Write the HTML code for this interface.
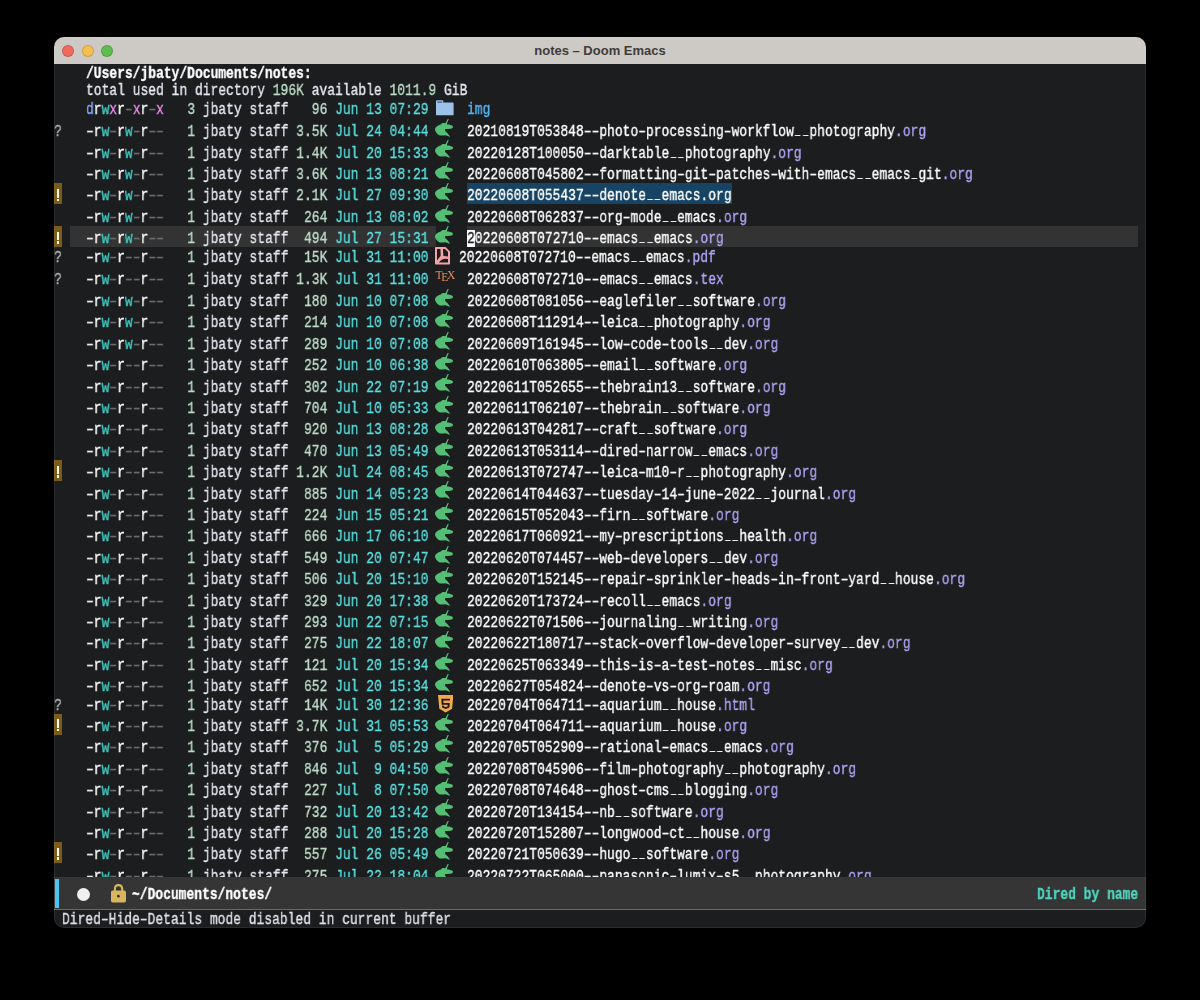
<!DOCTYPE html>
<html><head><meta charset="utf-8"><title>notes - Doom Emacs</title>
<style>
html,body{margin:0;padding:0;background:#000;width:1200px;height:1000px;overflow:hidden}
#win{position:absolute;left:54px;top:37px;width:1092px;height:891px;border-radius:10px;overflow:hidden;background:#1c1d1f}
#wb{position:absolute;left:0;top:0;width:1092px;height:891px;border-radius:10px;box-shadow:inset 0 0 0 1px rgba(255,255,255,0.07);pointer-events:none}
#tb{position:absolute;left:0;top:0;width:1092px;height:27px;background:#cdc9c5}
#tt{position:absolute;left:0;top:6px;width:1092px;text-align:center;font-family:"Liberation Sans",sans-serif;font-weight:bold;font-size:13px;color:#3e3c3b;white-space:pre}
.tl{position:absolute;top:7.8px;width:12px;height:12px;border-radius:50%;box-sizing:border-box;border:0.5px solid rgba(0,0,0,0.15)}
.r{position:absolute;left:31.700000000000003px;white-space:pre;font-family:"Liberation Mono",monospace;font-size:16px;line-height:20px;height:20px;transform:scaleX(0.8104);transform-origin:0 0;will-change:transform;color:#dfe1ea;-webkit-text-stroke:0.35px currentColor}
.r i{font-style:normal}
.r u{text-decoration:none;display:inline-block;transform:translateY(-2.5px) scaleX(0.66)}
.pd{color:#82aaff}.p0{color:#eeeeee}.pn{color:#6e6e6e}.pr{color:#ffffff}.pw{color:#3fcfc6}.px{color:#f08cf0}
.ln{color:#b4dcc2}.us{color:#e6e7f2}.sz{color:#bcdcc8}.dt{color:#58dede}
.fn{color:#ffffff}.ex{color:#b0a4f5}
.ic{position:absolute}
.bang{position:absolute;left:0;width:8px;height:21px;background:#7b5b16}
.bb{position:absolute;left:3px;top:5.6px;width:2.2px;height:8.8px;background:#fffaf0}
.bd{position:absolute;left:3px;top:15.4px;width:2.2px;height:2.4px;background:#fffaf0}
.hd{font-weight:bold;color:#ffffff}
.dn{color:#52b5f3}
.hl{position:absolute;background:#333333}
.sel{position:absolute;background:#174464}
.cur{color:#1c1d1f;-webkit-text-stroke:0.35px #1c1d1f}
.curb{position:absolute;background:#ffffff}
.tex{position:absolute;font-family:"Liberation Serif",serif;font-size:11.5px;color:#e98c5e;line-height:14px;white-space:pre;letter-spacing:-1.3px}
.tex span{position:relative;top:2px}
#ml{position:absolute;left:0;top:839.5px;width:1092px;height:32.5px;background:#353535;overflow:hidden}
#mlbar{position:absolute;left:1px;top:2.5px;width:3.5px;height:29px;background:#4cc4f2}
#mldot{position:absolute;left:22.6px;top:11.1px;width:13.6px;height:13.6px;border-radius:50%;background:#f0f0f0}
#lock{position:absolute;left:57px;top:7px}
.mlt{font-weight:bold;color:#ffffff}
.mlr{font-weight:bold;color:#4fd5bd}
#mlline{position:absolute;left:0;top:872px;width:1092px;height:1px;background:#6a6a6a}
.q{position:absolute;left:-0.7px;width:10px;font-family:"Liberation Mono",monospace;font-size:16px;line-height:20px;color:#b4b4b4;text-align:center;-webkit-text-stroke:0.3px #b4b4b4;transform:scaleX(0.8);will-change:transform}
</style></head><body>
<div id="win">
 <div id="tb"><div id="tt">notes – Doom Emacs</div>
  <div class="tl" style="left:8px;background:#ee6a5f"></div>
  <div class="tl" style="left:27.8px;background:#f5be4f"></div>
  <div class="tl" style="left:47px;background:#5ebd4e"></div>
 </div>
<div class="r hd" style="top:27.0px">/Users/jbaty/Documents/notes:</div>
<div class="r" style="top:44.0px"><i class="us">total used in directory </i><i class="sz">196K</i><i class="us"> available </i><i class="sz">1011.9</i><i class="us"> GiB</i></div>
<div class="r" style="top:63.0px"><i class="pd">d</i><i class="pr">r</i><i class="pw">w</i><i class="px">x</i><i class="pr">r</i><i class="pn">–</i><i class="px">x</i><i class="pr">r</i><i class="pn">–</i><i class="px">x</i>   <i class="ln">3</i> <i class="us">jbaty staff</i> <i class="sz">  96</i> <i class="dt">Jun 13 07:29</i></div>
<svg class="ic" style="left:381.7px;top:63.0px" width="18" height="16" viewBox="0 0 18 16"><path fill="#9cc2ea" d="M1 0.3 H6.4 Q7.3 0.3 7.3 1.2 V2.4 H16.6 Q17.6 2.4 17.6 3.4 V14.4 Q17.6 15.3 16.6 15.3 H1 Q0 15.3 0 14.4 V1.3 Q0 0.3 1 0.3 Z"/><rect x="1.3" y="1.6" width="5" height="1" fill="#33465c"/></svg>
<div class="r" style="top:63.0px;left:413.0px"><i class="dn">img</i></div>
<div class="hl" style="left:16.0px;top:189.2px;width:366.0px;height:21px"></div>
<div class="hl" style="left:413.0px;top:189.2px;width:671.2px;height:21px"></div>
<div class="curb" style="left:413.0px;top:193.0px;width:8px;height:17px"></div>
<div class="sel" style="left:412.7px;top:146.2px;width:264.9px;height:21px"></div>
<div class="q" style="top:85.2px">?</div>
<div class="r" style="top:85.2px"><i class="p0">–</i><i class="pr">r</i><i class="pw">w</i><i class="pn">–</i><i class="pr">r</i><i class="pw">w</i><i class="pn">–</i><i class="pr">r</i><i class="pn">–</i><i class="pn">–</i>   <i class="ln">1</i> <i class="us">jbaty staff</i> <i class="sz">3.5K</i> <i class="dt">Jul 24 04:44</i></div>
<svg class="ic" style="left:378.0px;top:80.0px" width="24" height="24" viewBox="0 0 24 24" fill="#54bf74"><path d="M16.90 2.10 C16.90 2.10 15.02 6.01 15.00 7.00 C14.98 7.99 15.92 7.33 16.80 7.60 C17.68 7.87 19.14 8.14 19.90 8.50 C20.66 8.86 21.00 9.60 21.00 9.60 C21.00 9.60 21.10 10.40 20.70 10.80 C20.30 11.20 20.11 11.58 18.80 11.80 C17.49 12.02 13.40 12.00 13.40 12.00 C13.40 12.00 12.98 12.59 13.00 13.00 C13.02 13.41 13.03 13.71 13.50 14.30 C13.97 14.89 14.92 15.53 15.60 16.30 C16.28 17.07 16.89 17.93 17.30 18.60 C17.71 19.27 17.90 20.00 17.90 20.00 C17.90 20.00 17.11 19.52 16.30 19.20 C15.49 18.88 14.61 18.31 13.40 18.20 C12.19 18.09 10.81 18.65 9.60 18.60 C8.39 18.55 7.67 18.44 6.70 17.90 C5.73 17.36 4.87 16.55 4.20 15.60 C3.53 14.65 3.09 13.54 3.00 12.60 C2.91 11.66 3.27 11.05 3.70 10.40 C4.13 9.75 4.64 9.47 5.40 9.00 C6.16 8.53 7.23 8.12 7.90 7.80 C8.57 7.48 8.70 7.49 9.10 7.20 C9.50 6.91 9.65 6.42 10.10 6.20 C10.55 5.98 11.01 6.05 11.60 6.00 C12.19 5.95 12.73 6.55 13.40 5.90 C14.07 5.25 15.30 2.40 15.30 2.40 C15.30 2.40 16.90 2.10 16.90 2.10 Z"/></svg>
<div class="r" style="top:85.2px;left:413.0px"><i class="fn">20210819T053848––photo–processing–workflow<u>_</u><u>_</u>photography</i><i class="ex">.org</i></div>
<div class="r" style="top:106.6px"><i class="p0">–</i><i class="pr">r</i><i class="pw">w</i><i class="pn">–</i><i class="pr">r</i><i class="pw">w</i><i class="pn">–</i><i class="pr">r</i><i class="pn">–</i><i class="pn">–</i>   <i class="ln">1</i> <i class="us">jbaty staff</i> <i class="sz">1.4K</i> <i class="dt">Jul 20 15:33</i></div>
<svg class="ic" style="left:378.0px;top:101.4px" width="24" height="24" viewBox="0 0 24 24" fill="#54bf74"><path d="M16.90 2.10 C16.90 2.10 15.02 6.01 15.00 7.00 C14.98 7.99 15.92 7.33 16.80 7.60 C17.68 7.87 19.14 8.14 19.90 8.50 C20.66 8.86 21.00 9.60 21.00 9.60 C21.00 9.60 21.10 10.40 20.70 10.80 C20.30 11.20 20.11 11.58 18.80 11.80 C17.49 12.02 13.40 12.00 13.40 12.00 C13.40 12.00 12.98 12.59 13.00 13.00 C13.02 13.41 13.03 13.71 13.50 14.30 C13.97 14.89 14.92 15.53 15.60 16.30 C16.28 17.07 16.89 17.93 17.30 18.60 C17.71 19.27 17.90 20.00 17.90 20.00 C17.90 20.00 17.11 19.52 16.30 19.20 C15.49 18.88 14.61 18.31 13.40 18.20 C12.19 18.09 10.81 18.65 9.60 18.60 C8.39 18.55 7.67 18.44 6.70 17.90 C5.73 17.36 4.87 16.55 4.20 15.60 C3.53 14.65 3.09 13.54 3.00 12.60 C2.91 11.66 3.27 11.05 3.70 10.40 C4.13 9.75 4.64 9.47 5.40 9.00 C6.16 8.53 7.23 8.12 7.90 7.80 C8.57 7.48 8.70 7.49 9.10 7.20 C9.50 6.91 9.65 6.42 10.10 6.20 C10.55 5.98 11.01 6.05 11.60 6.00 C12.19 5.95 12.73 6.55 13.40 5.90 C14.07 5.25 15.30 2.40 15.30 2.40 C15.30 2.40 16.90 2.10 16.90 2.10 Z"/></svg>
<div class="r" style="top:106.6px;left:413.0px"><i class="fn">20220128T100050––darktable<u>_</u><u>_</u>photography</i><i class="ex">.org</i></div>
<div class="r" style="top:128.0px"><i class="p0">–</i><i class="pr">r</i><i class="pw">w</i><i class="pn">–</i><i class="pr">r</i><i class="pw">w</i><i class="pn">–</i><i class="pr">r</i><i class="pn">–</i><i class="pn">–</i>   <i class="ln">1</i> <i class="us">jbaty staff</i> <i class="sz">3.6K</i> <i class="dt">Jun 13 08:21</i></div>
<svg class="ic" style="left:378.0px;top:122.8px" width="24" height="24" viewBox="0 0 24 24" fill="#54bf74"><path d="M16.90 2.10 C16.90 2.10 15.02 6.01 15.00 7.00 C14.98 7.99 15.92 7.33 16.80 7.60 C17.68 7.87 19.14 8.14 19.90 8.50 C20.66 8.86 21.00 9.60 21.00 9.60 C21.00 9.60 21.10 10.40 20.70 10.80 C20.30 11.20 20.11 11.58 18.80 11.80 C17.49 12.02 13.40 12.00 13.40 12.00 C13.40 12.00 12.98 12.59 13.00 13.00 C13.02 13.41 13.03 13.71 13.50 14.30 C13.97 14.89 14.92 15.53 15.60 16.30 C16.28 17.07 16.89 17.93 17.30 18.60 C17.71 19.27 17.90 20.00 17.90 20.00 C17.90 20.00 17.11 19.52 16.30 19.20 C15.49 18.88 14.61 18.31 13.40 18.20 C12.19 18.09 10.81 18.65 9.60 18.60 C8.39 18.55 7.67 18.44 6.70 17.90 C5.73 17.36 4.87 16.55 4.20 15.60 C3.53 14.65 3.09 13.54 3.00 12.60 C2.91 11.66 3.27 11.05 3.70 10.40 C4.13 9.75 4.64 9.47 5.40 9.00 C6.16 8.53 7.23 8.12 7.90 7.80 C8.57 7.48 8.70 7.49 9.10 7.20 C9.50 6.91 9.65 6.42 10.10 6.20 C10.55 5.98 11.01 6.05 11.60 6.00 C12.19 5.95 12.73 6.55 13.40 5.90 C14.07 5.25 15.30 2.40 15.30 2.40 C15.30 2.40 16.90 2.10 16.90 2.10 Z"/></svg>
<div class="r" style="top:128.0px;left:413.0px"><i class="fn">20220608T045802––formatting–git–patches–with–emacs<u>_</u><u>_</u>emacs<u>_</u>git</i><i class="ex">.org</i></div>
<div class="bang" style="top:146.2px"><div class="bb"></div><div class="bd"></div></div>
<div class="r" style="top:149.4px"><i class="p0">–</i><i class="pr">r</i><i class="pw">w</i><i class="pn">–</i><i class="pr">r</i><i class="pw">w</i><i class="pn">–</i><i class="pr">r</i><i class="pn">–</i><i class="pn">–</i>   <i class="ln">1</i> <i class="us">jbaty staff</i> <i class="sz">2.1K</i> <i class="dt">Jul 27 09:30</i></div>
<svg class="ic" style="left:378.0px;top:144.2px" width="24" height="24" viewBox="0 0 24 24" fill="#54bf74"><path d="M16.90 2.10 C16.90 2.10 15.02 6.01 15.00 7.00 C14.98 7.99 15.92 7.33 16.80 7.60 C17.68 7.87 19.14 8.14 19.90 8.50 C20.66 8.86 21.00 9.60 21.00 9.60 C21.00 9.60 21.10 10.40 20.70 10.80 C20.30 11.20 20.11 11.58 18.80 11.80 C17.49 12.02 13.40 12.00 13.40 12.00 C13.40 12.00 12.98 12.59 13.00 13.00 C13.02 13.41 13.03 13.71 13.50 14.30 C13.97 14.89 14.92 15.53 15.60 16.30 C16.28 17.07 16.89 17.93 17.30 18.60 C17.71 19.27 17.90 20.00 17.90 20.00 C17.90 20.00 17.11 19.52 16.30 19.20 C15.49 18.88 14.61 18.31 13.40 18.20 C12.19 18.09 10.81 18.65 9.60 18.60 C8.39 18.55 7.67 18.44 6.70 17.90 C5.73 17.36 4.87 16.55 4.20 15.60 C3.53 14.65 3.09 13.54 3.00 12.60 C2.91 11.66 3.27 11.05 3.70 10.40 C4.13 9.75 4.64 9.47 5.40 9.00 C6.16 8.53 7.23 8.12 7.90 7.80 C8.57 7.48 8.70 7.49 9.10 7.20 C9.50 6.91 9.65 6.42 10.10 6.20 C10.55 5.98 11.01 6.05 11.60 6.00 C12.19 5.95 12.73 6.55 13.40 5.90 C14.07 5.25 15.30 2.40 15.30 2.40 C15.30 2.40 16.90 2.10 16.90 2.10 Z"/></svg>
<div class="r" style="top:149.4px;left:413.0px"><i class="fn">20220608T055437––denote<u>_</u><u>_</u>emacs.org</i></div>
<div class="r" style="top:170.8px"><i class="p0">–</i><i class="pr">r</i><i class="pw">w</i><i class="pn">–</i><i class="pr">r</i><i class="pw">w</i><i class="pn">–</i><i class="pr">r</i><i class="pn">–</i><i class="pn">–</i>   <i class="ln">1</i> <i class="us">jbaty staff</i> <i class="sz"> 264</i> <i class="dt">Jun 13 08:02</i></div>
<svg class="ic" style="left:378.0px;top:165.6px" width="24" height="24" viewBox="0 0 24 24" fill="#54bf74"><path d="M16.90 2.10 C16.90 2.10 15.02 6.01 15.00 7.00 C14.98 7.99 15.92 7.33 16.80 7.60 C17.68 7.87 19.14 8.14 19.90 8.50 C20.66 8.86 21.00 9.60 21.00 9.60 C21.00 9.60 21.10 10.40 20.70 10.80 C20.30 11.20 20.11 11.58 18.80 11.80 C17.49 12.02 13.40 12.00 13.40 12.00 C13.40 12.00 12.98 12.59 13.00 13.00 C13.02 13.41 13.03 13.71 13.50 14.30 C13.97 14.89 14.92 15.53 15.60 16.30 C16.28 17.07 16.89 17.93 17.30 18.60 C17.71 19.27 17.90 20.00 17.90 20.00 C17.90 20.00 17.11 19.52 16.30 19.20 C15.49 18.88 14.61 18.31 13.40 18.20 C12.19 18.09 10.81 18.65 9.60 18.60 C8.39 18.55 7.67 18.44 6.70 17.90 C5.73 17.36 4.87 16.55 4.20 15.60 C3.53 14.65 3.09 13.54 3.00 12.60 C2.91 11.66 3.27 11.05 3.70 10.40 C4.13 9.75 4.64 9.47 5.40 9.00 C6.16 8.53 7.23 8.12 7.90 7.80 C8.57 7.48 8.70 7.49 9.10 7.20 C9.50 6.91 9.65 6.42 10.10 6.20 C10.55 5.98 11.01 6.05 11.60 6.00 C12.19 5.95 12.73 6.55 13.40 5.90 C14.07 5.25 15.30 2.40 15.30 2.40 C15.30 2.40 16.90 2.10 16.90 2.10 Z"/></svg>
<div class="r" style="top:170.8px;left:413.0px"><i class="fn">20220608T062837––org–mode<u>_</u><u>_</u>emacs</i><i class="ex">.org</i></div>
<div class="bang" style="top:189.0px"><div class="bb"></div><div class="bd"></div></div>
<div class="r" style="top:192.2px"><i class="p0">–</i><i class="pr">r</i><i class="pw">w</i><i class="pn">–</i><i class="pr">r</i><i class="pw">w</i><i class="pn">–</i><i class="pr">r</i><i class="pn">–</i><i class="pn">–</i>   <i class="ln">1</i> <i class="us">jbaty staff</i> <i class="sz"> 494</i> <i class="dt">Jul 27 15:31</i></div>
<svg class="ic" style="left:378.0px;top:187.0px" width="24" height="24" viewBox="0 0 24 24" fill="#54bf74"><path d="M16.90 2.10 C16.90 2.10 15.02 6.01 15.00 7.00 C14.98 7.99 15.92 7.33 16.80 7.60 C17.68 7.87 19.14 8.14 19.90 8.50 C20.66 8.86 21.00 9.60 21.00 9.60 C21.00 9.60 21.10 10.40 20.70 10.80 C20.30 11.20 20.11 11.58 18.80 11.80 C17.49 12.02 13.40 12.00 13.40 12.00 C13.40 12.00 12.98 12.59 13.00 13.00 C13.02 13.41 13.03 13.71 13.50 14.30 C13.97 14.89 14.92 15.53 15.60 16.30 C16.28 17.07 16.89 17.93 17.30 18.60 C17.71 19.27 17.90 20.00 17.90 20.00 C17.90 20.00 17.11 19.52 16.30 19.20 C15.49 18.88 14.61 18.31 13.40 18.20 C12.19 18.09 10.81 18.65 9.60 18.60 C8.39 18.55 7.67 18.44 6.70 17.90 C5.73 17.36 4.87 16.55 4.20 15.60 C3.53 14.65 3.09 13.54 3.00 12.60 C2.91 11.66 3.27 11.05 3.70 10.40 C4.13 9.75 4.64 9.47 5.40 9.00 C6.16 8.53 7.23 8.12 7.90 7.80 C8.57 7.48 8.70 7.49 9.10 7.20 C9.50 6.91 9.65 6.42 10.10 6.20 C10.55 5.98 11.01 6.05 11.60 6.00 C12.19 5.95 12.73 6.55 13.40 5.90 C14.07 5.25 15.30 2.40 15.30 2.40 C15.30 2.40 16.90 2.10 16.90 2.10 Z"/></svg>
<div class="r" style="top:192.2px;left:413.0px"><i class="cur">2</i><i class="fn">0220608T072710––emacs<u>_</u><u>_</u>emacs</i><i class="ex">.org</i></div>
<div class="q" style="top:210.9px">?</div>
<div class="r" style="top:210.9px"><i class="p0">–</i><i class="pr">r</i><i class="pw">w</i><i class="pn">–</i><i class="pr">r</i><i class="pn">–</i><i class="pn">–</i><i class="pr">r</i><i class="pn">–</i><i class="pn">–</i>   <i class="ln">1</i> <i class="us">jbaty staff</i> <i class="sz"> 15K</i> <i class="dt">Jul 31 11:00</i></div>
<svg class="ic" style="left:381.0px;top:210.0px" width="15" height="17.5" viewBox="0 0 15 17.5"><path fill="#f2a3a3" fill-rule="evenodd" d="M0.8 0 H10.6 L15 4.4 V16.7 Q15 17.5 14.2 17.5 H0.8 Q0 17.5 0 16.7 V0.8 Q0 0 0.8 0 Z M2 2 H5.4 L5.7 8.8 L2 13.6 Z M8 2 H10 L13 5 V9.4 L8.5 9.1 L8.1 5.5 Z M3.9 15.5 H13 V12 Q9.5 11.6 7.2 12.4 Q5.2 13.3 3.9 15.5 Z"/></svg>
<div class="r" style="top:210.9px;left:405.0px"><i class="fn">20220608T072710––emacs<u>_</u><u>_</u>emacs</i><i class="ex">.pdf</i></div>
<div class="q" style="top:232.8px">?</div>
<div class="r" style="top:232.8px"><i class="p0">–</i><i class="pr">r</i><i class="pw">w</i><i class="pn">–</i><i class="pr">r</i><i class="pn">–</i><i class="pn">–</i><i class="pr">r</i><i class="pn">–</i><i class="pn">–</i>   <i class="ln">1</i> <i class="us">jbaty staff</i> <i class="sz">1.3K</i> <i class="dt">Jul 31 11:00</i></div>
<div class="tex" style="left:381.5px;top:231.0px">T<span>E</span>X</div>
<div class="r" style="top:232.8px;left:413.0px"><i class="fn">20220608T072710––emacs<u>_</u><u>_</u>emacs</i><i class="ex">.tex</i></div>
<div class="r" style="top:255.0px"><i class="p0">–</i><i class="pr">r</i><i class="pw">w</i><i class="pn">–</i><i class="pr">r</i><i class="pw">w</i><i class="pn">–</i><i class="pr">r</i><i class="pn">–</i><i class="pn">–</i>   <i class="ln">1</i> <i class="us">jbaty staff</i> <i class="sz"> 180</i> <i class="dt">Jun 10 07:08</i></div>
<svg class="ic" style="left:378.0px;top:249.8px" width="24" height="24" viewBox="0 0 24 24" fill="#54bf74"><path d="M16.90 2.10 C16.90 2.10 15.02 6.01 15.00 7.00 C14.98 7.99 15.92 7.33 16.80 7.60 C17.68 7.87 19.14 8.14 19.90 8.50 C20.66 8.86 21.00 9.60 21.00 9.60 C21.00 9.60 21.10 10.40 20.70 10.80 C20.30 11.20 20.11 11.58 18.80 11.80 C17.49 12.02 13.40 12.00 13.40 12.00 C13.40 12.00 12.98 12.59 13.00 13.00 C13.02 13.41 13.03 13.71 13.50 14.30 C13.97 14.89 14.92 15.53 15.60 16.30 C16.28 17.07 16.89 17.93 17.30 18.60 C17.71 19.27 17.90 20.00 17.90 20.00 C17.90 20.00 17.11 19.52 16.30 19.20 C15.49 18.88 14.61 18.31 13.40 18.20 C12.19 18.09 10.81 18.65 9.60 18.60 C8.39 18.55 7.67 18.44 6.70 17.90 C5.73 17.36 4.87 16.55 4.20 15.60 C3.53 14.65 3.09 13.54 3.00 12.60 C2.91 11.66 3.27 11.05 3.70 10.40 C4.13 9.75 4.64 9.47 5.40 9.00 C6.16 8.53 7.23 8.12 7.90 7.80 C8.57 7.48 8.70 7.49 9.10 7.20 C9.50 6.91 9.65 6.42 10.10 6.20 C10.55 5.98 11.01 6.05 11.60 6.00 C12.19 5.95 12.73 6.55 13.40 5.90 C14.07 5.25 15.30 2.40 15.30 2.40 C15.30 2.40 16.90 2.10 16.90 2.10 Z"/></svg>
<div class="r" style="top:255.0px;left:413.0px"><i class="fn">20220608T081056––eaglefiler<u>_</u><u>_</u>software</i><i class="ex">.org</i></div>
<div class="r" style="top:276.4px"><i class="p0">–</i><i class="pr">r</i><i class="pw">w</i><i class="pn">–</i><i class="pr">r</i><i class="pw">w</i><i class="pn">–</i><i class="pr">r</i><i class="pn">–</i><i class="pn">–</i>   <i class="ln">1</i> <i class="us">jbaty staff</i> <i class="sz"> 214</i> <i class="dt">Jun 10 07:08</i></div>
<svg class="ic" style="left:378.0px;top:271.2px" width="24" height="24" viewBox="0 0 24 24" fill="#54bf74"><path d="M16.90 2.10 C16.90 2.10 15.02 6.01 15.00 7.00 C14.98 7.99 15.92 7.33 16.80 7.60 C17.68 7.87 19.14 8.14 19.90 8.50 C20.66 8.86 21.00 9.60 21.00 9.60 C21.00 9.60 21.10 10.40 20.70 10.80 C20.30 11.20 20.11 11.58 18.80 11.80 C17.49 12.02 13.40 12.00 13.40 12.00 C13.40 12.00 12.98 12.59 13.00 13.00 C13.02 13.41 13.03 13.71 13.50 14.30 C13.97 14.89 14.92 15.53 15.60 16.30 C16.28 17.07 16.89 17.93 17.30 18.60 C17.71 19.27 17.90 20.00 17.90 20.00 C17.90 20.00 17.11 19.52 16.30 19.20 C15.49 18.88 14.61 18.31 13.40 18.20 C12.19 18.09 10.81 18.65 9.60 18.60 C8.39 18.55 7.67 18.44 6.70 17.90 C5.73 17.36 4.87 16.55 4.20 15.60 C3.53 14.65 3.09 13.54 3.00 12.60 C2.91 11.66 3.27 11.05 3.70 10.40 C4.13 9.75 4.64 9.47 5.40 9.00 C6.16 8.53 7.23 8.12 7.90 7.80 C8.57 7.48 8.70 7.49 9.10 7.20 C9.50 6.91 9.65 6.42 10.10 6.20 C10.55 5.98 11.01 6.05 11.60 6.00 C12.19 5.95 12.73 6.55 13.40 5.90 C14.07 5.25 15.30 2.40 15.30 2.40 C15.30 2.40 16.90 2.10 16.90 2.10 Z"/></svg>
<div class="r" style="top:276.4px;left:413.0px"><i class="fn">20220608T112914––leica<u>_</u><u>_</u>photography</i><i class="ex">.org</i></div>
<div class="r" style="top:297.8px"><i class="p0">–</i><i class="pr">r</i><i class="pw">w</i><i class="pn">–</i><i class="pr">r</i><i class="pw">w</i><i class="pn">–</i><i class="pr">r</i><i class="pn">–</i><i class="pn">–</i>   <i class="ln">1</i> <i class="us">jbaty staff</i> <i class="sz"> 289</i> <i class="dt">Jun 10 07:08</i></div>
<svg class="ic" style="left:378.0px;top:292.6px" width="24" height="24" viewBox="0 0 24 24" fill="#54bf74"><path d="M16.90 2.10 C16.90 2.10 15.02 6.01 15.00 7.00 C14.98 7.99 15.92 7.33 16.80 7.60 C17.68 7.87 19.14 8.14 19.90 8.50 C20.66 8.86 21.00 9.60 21.00 9.60 C21.00 9.60 21.10 10.40 20.70 10.80 C20.30 11.20 20.11 11.58 18.80 11.80 C17.49 12.02 13.40 12.00 13.40 12.00 C13.40 12.00 12.98 12.59 13.00 13.00 C13.02 13.41 13.03 13.71 13.50 14.30 C13.97 14.89 14.92 15.53 15.60 16.30 C16.28 17.07 16.89 17.93 17.30 18.60 C17.71 19.27 17.90 20.00 17.90 20.00 C17.90 20.00 17.11 19.52 16.30 19.20 C15.49 18.88 14.61 18.31 13.40 18.20 C12.19 18.09 10.81 18.65 9.60 18.60 C8.39 18.55 7.67 18.44 6.70 17.90 C5.73 17.36 4.87 16.55 4.20 15.60 C3.53 14.65 3.09 13.54 3.00 12.60 C2.91 11.66 3.27 11.05 3.70 10.40 C4.13 9.75 4.64 9.47 5.40 9.00 C6.16 8.53 7.23 8.12 7.90 7.80 C8.57 7.48 8.70 7.49 9.10 7.20 C9.50 6.91 9.65 6.42 10.10 6.20 C10.55 5.98 11.01 6.05 11.60 6.00 C12.19 5.95 12.73 6.55 13.40 5.90 C14.07 5.25 15.30 2.40 15.30 2.40 C15.30 2.40 16.90 2.10 16.90 2.10 Z"/></svg>
<div class="r" style="top:297.8px;left:413.0px"><i class="fn">20220609T161945––low–code–tools<u>_</u><u>_</u>dev</i><i class="ex">.org</i></div>
<div class="r" style="top:319.2px"><i class="p0">–</i><i class="pr">r</i><i class="pw">w</i><i class="pn">–</i><i class="pr">r</i><i class="pn">–</i><i class="pn">–</i><i class="pr">r</i><i class="pn">–</i><i class="pn">–</i>   <i class="ln">1</i> <i class="us">jbaty staff</i> <i class="sz"> 252</i> <i class="dt">Jun 10 06:38</i></div>
<svg class="ic" style="left:378.0px;top:314.0px" width="24" height="24" viewBox="0 0 24 24" fill="#54bf74"><path d="M16.90 2.10 C16.90 2.10 15.02 6.01 15.00 7.00 C14.98 7.99 15.92 7.33 16.80 7.60 C17.68 7.87 19.14 8.14 19.90 8.50 C20.66 8.86 21.00 9.60 21.00 9.60 C21.00 9.60 21.10 10.40 20.70 10.80 C20.30 11.20 20.11 11.58 18.80 11.80 C17.49 12.02 13.40 12.00 13.40 12.00 C13.40 12.00 12.98 12.59 13.00 13.00 C13.02 13.41 13.03 13.71 13.50 14.30 C13.97 14.89 14.92 15.53 15.60 16.30 C16.28 17.07 16.89 17.93 17.30 18.60 C17.71 19.27 17.90 20.00 17.90 20.00 C17.90 20.00 17.11 19.52 16.30 19.20 C15.49 18.88 14.61 18.31 13.40 18.20 C12.19 18.09 10.81 18.65 9.60 18.60 C8.39 18.55 7.67 18.44 6.70 17.90 C5.73 17.36 4.87 16.55 4.20 15.60 C3.53 14.65 3.09 13.54 3.00 12.60 C2.91 11.66 3.27 11.05 3.70 10.40 C4.13 9.75 4.64 9.47 5.40 9.00 C6.16 8.53 7.23 8.12 7.90 7.80 C8.57 7.48 8.70 7.49 9.10 7.20 C9.50 6.91 9.65 6.42 10.10 6.20 C10.55 5.98 11.01 6.05 11.60 6.00 C12.19 5.95 12.73 6.55 13.40 5.90 C14.07 5.25 15.30 2.40 15.30 2.40 C15.30 2.40 16.90 2.10 16.90 2.10 Z"/></svg>
<div class="r" style="top:319.2px;left:413.0px"><i class="fn">20220610T063805––email<u>_</u><u>_</u>software</i><i class="ex">.org</i></div>
<div class="r" style="top:340.6px"><i class="p0">–</i><i class="pr">r</i><i class="pw">w</i><i class="pn">–</i><i class="pr">r</i><i class="pn">–</i><i class="pn">–</i><i class="pr">r</i><i class="pn">–</i><i class="pn">–</i>   <i class="ln">1</i> <i class="us">jbaty staff</i> <i class="sz"> 302</i> <i class="dt">Jun 22 07:19</i></div>
<svg class="ic" style="left:378.0px;top:335.4px" width="24" height="24" viewBox="0 0 24 24" fill="#54bf74"><path d="M16.90 2.10 C16.90 2.10 15.02 6.01 15.00 7.00 C14.98 7.99 15.92 7.33 16.80 7.60 C17.68 7.87 19.14 8.14 19.90 8.50 C20.66 8.86 21.00 9.60 21.00 9.60 C21.00 9.60 21.10 10.40 20.70 10.80 C20.30 11.20 20.11 11.58 18.80 11.80 C17.49 12.02 13.40 12.00 13.40 12.00 C13.40 12.00 12.98 12.59 13.00 13.00 C13.02 13.41 13.03 13.71 13.50 14.30 C13.97 14.89 14.92 15.53 15.60 16.30 C16.28 17.07 16.89 17.93 17.30 18.60 C17.71 19.27 17.90 20.00 17.90 20.00 C17.90 20.00 17.11 19.52 16.30 19.20 C15.49 18.88 14.61 18.31 13.40 18.20 C12.19 18.09 10.81 18.65 9.60 18.60 C8.39 18.55 7.67 18.44 6.70 17.90 C5.73 17.36 4.87 16.55 4.20 15.60 C3.53 14.65 3.09 13.54 3.00 12.60 C2.91 11.66 3.27 11.05 3.70 10.40 C4.13 9.75 4.64 9.47 5.40 9.00 C6.16 8.53 7.23 8.12 7.90 7.80 C8.57 7.48 8.70 7.49 9.10 7.20 C9.50 6.91 9.65 6.42 10.10 6.20 C10.55 5.98 11.01 6.05 11.60 6.00 C12.19 5.95 12.73 6.55 13.40 5.90 C14.07 5.25 15.30 2.40 15.30 2.40 C15.30 2.40 16.90 2.10 16.90 2.10 Z"/></svg>
<div class="r" style="top:340.6px;left:413.0px"><i class="fn">20220611T052655––thebrain13<u>_</u><u>_</u>software</i><i class="ex">.org</i></div>
<div class="r" style="top:362.0px"><i class="p0">–</i><i class="pr">r</i><i class="pw">w</i><i class="pn">–</i><i class="pr">r</i><i class="pn">–</i><i class="pn">–</i><i class="pr">r</i><i class="pn">–</i><i class="pn">–</i>   <i class="ln">1</i> <i class="us">jbaty staff</i> <i class="sz"> 704</i> <i class="dt">Jul 10 05:33</i></div>
<svg class="ic" style="left:378.0px;top:356.8px" width="24" height="24" viewBox="0 0 24 24" fill="#54bf74"><path d="M16.90 2.10 C16.90 2.10 15.02 6.01 15.00 7.00 C14.98 7.99 15.92 7.33 16.80 7.60 C17.68 7.87 19.14 8.14 19.90 8.50 C20.66 8.86 21.00 9.60 21.00 9.60 C21.00 9.60 21.10 10.40 20.70 10.80 C20.30 11.20 20.11 11.58 18.80 11.80 C17.49 12.02 13.40 12.00 13.40 12.00 C13.40 12.00 12.98 12.59 13.00 13.00 C13.02 13.41 13.03 13.71 13.50 14.30 C13.97 14.89 14.92 15.53 15.60 16.30 C16.28 17.07 16.89 17.93 17.30 18.60 C17.71 19.27 17.90 20.00 17.90 20.00 C17.90 20.00 17.11 19.52 16.30 19.20 C15.49 18.88 14.61 18.31 13.40 18.20 C12.19 18.09 10.81 18.65 9.60 18.60 C8.39 18.55 7.67 18.44 6.70 17.90 C5.73 17.36 4.87 16.55 4.20 15.60 C3.53 14.65 3.09 13.54 3.00 12.60 C2.91 11.66 3.27 11.05 3.70 10.40 C4.13 9.75 4.64 9.47 5.40 9.00 C6.16 8.53 7.23 8.12 7.90 7.80 C8.57 7.48 8.70 7.49 9.10 7.20 C9.50 6.91 9.65 6.42 10.10 6.20 C10.55 5.98 11.01 6.05 11.60 6.00 C12.19 5.95 12.73 6.55 13.40 5.90 C14.07 5.25 15.30 2.40 15.30 2.40 C15.30 2.40 16.90 2.10 16.90 2.10 Z"/></svg>
<div class="r" style="top:362.0px;left:413.0px"><i class="fn">20220611T062107––thebrain<u>_</u><u>_</u>software</i><i class="ex">.org</i></div>
<div class="r" style="top:383.4px"><i class="p0">–</i><i class="pr">r</i><i class="pw">w</i><i class="pn">–</i><i class="pr">r</i><i class="pn">–</i><i class="pn">–</i><i class="pr">r</i><i class="pn">–</i><i class="pn">–</i>   <i class="ln">1</i> <i class="us">jbaty staff</i> <i class="sz"> 920</i> <i class="dt">Jun 13 08:28</i></div>
<svg class="ic" style="left:378.0px;top:378.2px" width="24" height="24" viewBox="0 0 24 24" fill="#54bf74"><path d="M16.90 2.10 C16.90 2.10 15.02 6.01 15.00 7.00 C14.98 7.99 15.92 7.33 16.80 7.60 C17.68 7.87 19.14 8.14 19.90 8.50 C20.66 8.86 21.00 9.60 21.00 9.60 C21.00 9.60 21.10 10.40 20.70 10.80 C20.30 11.20 20.11 11.58 18.80 11.80 C17.49 12.02 13.40 12.00 13.40 12.00 C13.40 12.00 12.98 12.59 13.00 13.00 C13.02 13.41 13.03 13.71 13.50 14.30 C13.97 14.89 14.92 15.53 15.60 16.30 C16.28 17.07 16.89 17.93 17.30 18.60 C17.71 19.27 17.90 20.00 17.90 20.00 C17.90 20.00 17.11 19.52 16.30 19.20 C15.49 18.88 14.61 18.31 13.40 18.20 C12.19 18.09 10.81 18.65 9.60 18.60 C8.39 18.55 7.67 18.44 6.70 17.90 C5.73 17.36 4.87 16.55 4.20 15.60 C3.53 14.65 3.09 13.54 3.00 12.60 C2.91 11.66 3.27 11.05 3.70 10.40 C4.13 9.75 4.64 9.47 5.40 9.00 C6.16 8.53 7.23 8.12 7.90 7.80 C8.57 7.48 8.70 7.49 9.10 7.20 C9.50 6.91 9.65 6.42 10.10 6.20 C10.55 5.98 11.01 6.05 11.60 6.00 C12.19 5.95 12.73 6.55 13.40 5.90 C14.07 5.25 15.30 2.40 15.30 2.40 C15.30 2.40 16.90 2.10 16.90 2.10 Z"/></svg>
<div class="r" style="top:383.4px;left:413.0px"><i class="fn">20220613T042817––craft<u>_</u><u>_</u>software</i><i class="ex">.org</i></div>
<div class="r" style="top:404.8px"><i class="p0">–</i><i class="pr">r</i><i class="pw">w</i><i class="pn">–</i><i class="pr">r</i><i class="pn">–</i><i class="pn">–</i><i class="pr">r</i><i class="pn">–</i><i class="pn">–</i>   <i class="ln">1</i> <i class="us">jbaty staff</i> <i class="sz"> 470</i> <i class="dt">Jun 13 05:49</i></div>
<svg class="ic" style="left:378.0px;top:399.6px" width="24" height="24" viewBox="0 0 24 24" fill="#54bf74"><path d="M16.90 2.10 C16.90 2.10 15.02 6.01 15.00 7.00 C14.98 7.99 15.92 7.33 16.80 7.60 C17.68 7.87 19.14 8.14 19.90 8.50 C20.66 8.86 21.00 9.60 21.00 9.60 C21.00 9.60 21.10 10.40 20.70 10.80 C20.30 11.20 20.11 11.58 18.80 11.80 C17.49 12.02 13.40 12.00 13.40 12.00 C13.40 12.00 12.98 12.59 13.00 13.00 C13.02 13.41 13.03 13.71 13.50 14.30 C13.97 14.89 14.92 15.53 15.60 16.30 C16.28 17.07 16.89 17.93 17.30 18.60 C17.71 19.27 17.90 20.00 17.90 20.00 C17.90 20.00 17.11 19.52 16.30 19.20 C15.49 18.88 14.61 18.31 13.40 18.20 C12.19 18.09 10.81 18.65 9.60 18.60 C8.39 18.55 7.67 18.44 6.70 17.90 C5.73 17.36 4.87 16.55 4.20 15.60 C3.53 14.65 3.09 13.54 3.00 12.60 C2.91 11.66 3.27 11.05 3.70 10.40 C4.13 9.75 4.64 9.47 5.40 9.00 C6.16 8.53 7.23 8.12 7.90 7.80 C8.57 7.48 8.70 7.49 9.10 7.20 C9.50 6.91 9.65 6.42 10.10 6.20 C10.55 5.98 11.01 6.05 11.60 6.00 C12.19 5.95 12.73 6.55 13.40 5.90 C14.07 5.25 15.30 2.40 15.30 2.40 C15.30 2.40 16.90 2.10 16.90 2.10 Z"/></svg>
<div class="r" style="top:404.8px;left:413.0px"><i class="fn">20220613T053114––dired–narrow<u>_</u><u>_</u>emacs</i><i class="ex">.org</i></div>
<div class="bang" style="top:423.0px"><div class="bb"></div><div class="bd"></div></div>
<div class="r" style="top:426.2px"><i class="p0">–</i><i class="pr">r</i><i class="pw">w</i><i class="pn">–</i><i class="pr">r</i><i class="pn">–</i><i class="pn">–</i><i class="pr">r</i><i class="pn">–</i><i class="pn">–</i>   <i class="ln">1</i> <i class="us">jbaty staff</i> <i class="sz">1.2K</i> <i class="dt">Jul 24 08:45</i></div>
<svg class="ic" style="left:378.0px;top:421.0px" width="24" height="24" viewBox="0 0 24 24" fill="#54bf74"><path d="M16.90 2.10 C16.90 2.10 15.02 6.01 15.00 7.00 C14.98 7.99 15.92 7.33 16.80 7.60 C17.68 7.87 19.14 8.14 19.90 8.50 C20.66 8.86 21.00 9.60 21.00 9.60 C21.00 9.60 21.10 10.40 20.70 10.80 C20.30 11.20 20.11 11.58 18.80 11.80 C17.49 12.02 13.40 12.00 13.40 12.00 C13.40 12.00 12.98 12.59 13.00 13.00 C13.02 13.41 13.03 13.71 13.50 14.30 C13.97 14.89 14.92 15.53 15.60 16.30 C16.28 17.07 16.89 17.93 17.30 18.60 C17.71 19.27 17.90 20.00 17.90 20.00 C17.90 20.00 17.11 19.52 16.30 19.20 C15.49 18.88 14.61 18.31 13.40 18.20 C12.19 18.09 10.81 18.65 9.60 18.60 C8.39 18.55 7.67 18.44 6.70 17.90 C5.73 17.36 4.87 16.55 4.20 15.60 C3.53 14.65 3.09 13.54 3.00 12.60 C2.91 11.66 3.27 11.05 3.70 10.40 C4.13 9.75 4.64 9.47 5.40 9.00 C6.16 8.53 7.23 8.12 7.90 7.80 C8.57 7.48 8.70 7.49 9.10 7.20 C9.50 6.91 9.65 6.42 10.10 6.20 C10.55 5.98 11.01 6.05 11.60 6.00 C12.19 5.95 12.73 6.55 13.40 5.90 C14.07 5.25 15.30 2.40 15.30 2.40 C15.30 2.40 16.90 2.10 16.90 2.10 Z"/></svg>
<div class="r" style="top:426.2px;left:413.0px"><i class="fn">20220613T072747––leica–m10–r<u>_</u><u>_</u>photography</i><i class="ex">.org</i></div>
<div class="r" style="top:447.6px"><i class="p0">–</i><i class="pr">r</i><i class="pw">w</i><i class="pn">–</i><i class="pr">r</i><i class="pn">–</i><i class="pn">–</i><i class="pr">r</i><i class="pn">–</i><i class="pn">–</i>   <i class="ln">1</i> <i class="us">jbaty staff</i> <i class="sz"> 885</i> <i class="dt">Jun 14 05:23</i></div>
<svg class="ic" style="left:378.0px;top:442.4px" width="24" height="24" viewBox="0 0 24 24" fill="#54bf74"><path d="M16.90 2.10 C16.90 2.10 15.02 6.01 15.00 7.00 C14.98 7.99 15.92 7.33 16.80 7.60 C17.68 7.87 19.14 8.14 19.90 8.50 C20.66 8.86 21.00 9.60 21.00 9.60 C21.00 9.60 21.10 10.40 20.70 10.80 C20.30 11.20 20.11 11.58 18.80 11.80 C17.49 12.02 13.40 12.00 13.40 12.00 C13.40 12.00 12.98 12.59 13.00 13.00 C13.02 13.41 13.03 13.71 13.50 14.30 C13.97 14.89 14.92 15.53 15.60 16.30 C16.28 17.07 16.89 17.93 17.30 18.60 C17.71 19.27 17.90 20.00 17.90 20.00 C17.90 20.00 17.11 19.52 16.30 19.20 C15.49 18.88 14.61 18.31 13.40 18.20 C12.19 18.09 10.81 18.65 9.60 18.60 C8.39 18.55 7.67 18.44 6.70 17.90 C5.73 17.36 4.87 16.55 4.20 15.60 C3.53 14.65 3.09 13.54 3.00 12.60 C2.91 11.66 3.27 11.05 3.70 10.40 C4.13 9.75 4.64 9.47 5.40 9.00 C6.16 8.53 7.23 8.12 7.90 7.80 C8.57 7.48 8.70 7.49 9.10 7.20 C9.50 6.91 9.65 6.42 10.10 6.20 C10.55 5.98 11.01 6.05 11.60 6.00 C12.19 5.95 12.73 6.55 13.40 5.90 C14.07 5.25 15.30 2.40 15.30 2.40 C15.30 2.40 16.90 2.10 16.90 2.10 Z"/></svg>
<div class="r" style="top:447.6px;left:413.0px"><i class="fn">20220614T044637––tuesday–14–june–2022<u>_</u><u>_</u>journal</i><i class="ex">.org</i></div>
<div class="r" style="top:469.0px"><i class="p0">–</i><i class="pr">r</i><i class="pw">w</i><i class="pn">–</i><i class="pr">r</i><i class="pn">–</i><i class="pn">–</i><i class="pr">r</i><i class="pn">–</i><i class="pn">–</i>   <i class="ln">1</i> <i class="us">jbaty staff</i> <i class="sz"> 224</i> <i class="dt">Jun 15 05:21</i></div>
<svg class="ic" style="left:378.0px;top:463.8px" width="24" height="24" viewBox="0 0 24 24" fill="#54bf74"><path d="M16.90 2.10 C16.90 2.10 15.02 6.01 15.00 7.00 C14.98 7.99 15.92 7.33 16.80 7.60 C17.68 7.87 19.14 8.14 19.90 8.50 C20.66 8.86 21.00 9.60 21.00 9.60 C21.00 9.60 21.10 10.40 20.70 10.80 C20.30 11.20 20.11 11.58 18.80 11.80 C17.49 12.02 13.40 12.00 13.40 12.00 C13.40 12.00 12.98 12.59 13.00 13.00 C13.02 13.41 13.03 13.71 13.50 14.30 C13.97 14.89 14.92 15.53 15.60 16.30 C16.28 17.07 16.89 17.93 17.30 18.60 C17.71 19.27 17.90 20.00 17.90 20.00 C17.90 20.00 17.11 19.52 16.30 19.20 C15.49 18.88 14.61 18.31 13.40 18.20 C12.19 18.09 10.81 18.65 9.60 18.60 C8.39 18.55 7.67 18.44 6.70 17.90 C5.73 17.36 4.87 16.55 4.20 15.60 C3.53 14.65 3.09 13.54 3.00 12.60 C2.91 11.66 3.27 11.05 3.70 10.40 C4.13 9.75 4.64 9.47 5.40 9.00 C6.16 8.53 7.23 8.12 7.90 7.80 C8.57 7.48 8.70 7.49 9.10 7.20 C9.50 6.91 9.65 6.42 10.10 6.20 C10.55 5.98 11.01 6.05 11.60 6.00 C12.19 5.95 12.73 6.55 13.40 5.90 C14.07 5.25 15.30 2.40 15.30 2.40 C15.30 2.40 16.90 2.10 16.90 2.10 Z"/></svg>
<div class="r" style="top:469.0px;left:413.0px"><i class="fn">20220615T052043––firn<u>_</u><u>_</u>software</i><i class="ex">.org</i></div>
<div class="r" style="top:490.4px"><i class="p0">–</i><i class="pr">r</i><i class="pw">w</i><i class="pn">–</i><i class="pr">r</i><i class="pn">–</i><i class="pn">–</i><i class="pr">r</i><i class="pn">–</i><i class="pn">–</i>   <i class="ln">1</i> <i class="us">jbaty staff</i> <i class="sz"> 666</i> <i class="dt">Jun 17 06:10</i></div>
<svg class="ic" style="left:378.0px;top:485.2px" width="24" height="24" viewBox="0 0 24 24" fill="#54bf74"><path d="M16.90 2.10 C16.90 2.10 15.02 6.01 15.00 7.00 C14.98 7.99 15.92 7.33 16.80 7.60 C17.68 7.87 19.14 8.14 19.90 8.50 C20.66 8.86 21.00 9.60 21.00 9.60 C21.00 9.60 21.10 10.40 20.70 10.80 C20.30 11.20 20.11 11.58 18.80 11.80 C17.49 12.02 13.40 12.00 13.40 12.00 C13.40 12.00 12.98 12.59 13.00 13.00 C13.02 13.41 13.03 13.71 13.50 14.30 C13.97 14.89 14.92 15.53 15.60 16.30 C16.28 17.07 16.89 17.93 17.30 18.60 C17.71 19.27 17.90 20.00 17.90 20.00 C17.90 20.00 17.11 19.52 16.30 19.20 C15.49 18.88 14.61 18.31 13.40 18.20 C12.19 18.09 10.81 18.65 9.60 18.60 C8.39 18.55 7.67 18.44 6.70 17.90 C5.73 17.36 4.87 16.55 4.20 15.60 C3.53 14.65 3.09 13.54 3.00 12.60 C2.91 11.66 3.27 11.05 3.70 10.40 C4.13 9.75 4.64 9.47 5.40 9.00 C6.16 8.53 7.23 8.12 7.90 7.80 C8.57 7.48 8.70 7.49 9.10 7.20 C9.50 6.91 9.65 6.42 10.10 6.20 C10.55 5.98 11.01 6.05 11.60 6.00 C12.19 5.95 12.73 6.55 13.40 5.90 C14.07 5.25 15.30 2.40 15.30 2.40 C15.30 2.40 16.90 2.10 16.90 2.10 Z"/></svg>
<div class="r" style="top:490.4px;left:413.0px"><i class="fn">20220617T060921––my–prescriptions<u>_</u><u>_</u>health</i><i class="ex">.org</i></div>
<div class="r" style="top:511.8px"><i class="p0">–</i><i class="pr">r</i><i class="pw">w</i><i class="pn">–</i><i class="pr">r</i><i class="pn">–</i><i class="pn">–</i><i class="pr">r</i><i class="pn">–</i><i class="pn">–</i>   <i class="ln">1</i> <i class="us">jbaty staff</i> <i class="sz"> 549</i> <i class="dt">Jun 20 07:47</i></div>
<svg class="ic" style="left:378.0px;top:506.6px" width="24" height="24" viewBox="0 0 24 24" fill="#54bf74"><path d="M16.90 2.10 C16.90 2.10 15.02 6.01 15.00 7.00 C14.98 7.99 15.92 7.33 16.80 7.60 C17.68 7.87 19.14 8.14 19.90 8.50 C20.66 8.86 21.00 9.60 21.00 9.60 C21.00 9.60 21.10 10.40 20.70 10.80 C20.30 11.20 20.11 11.58 18.80 11.80 C17.49 12.02 13.40 12.00 13.40 12.00 C13.40 12.00 12.98 12.59 13.00 13.00 C13.02 13.41 13.03 13.71 13.50 14.30 C13.97 14.89 14.92 15.53 15.60 16.30 C16.28 17.07 16.89 17.93 17.30 18.60 C17.71 19.27 17.90 20.00 17.90 20.00 C17.90 20.00 17.11 19.52 16.30 19.20 C15.49 18.88 14.61 18.31 13.40 18.20 C12.19 18.09 10.81 18.65 9.60 18.60 C8.39 18.55 7.67 18.44 6.70 17.90 C5.73 17.36 4.87 16.55 4.20 15.60 C3.53 14.65 3.09 13.54 3.00 12.60 C2.91 11.66 3.27 11.05 3.70 10.40 C4.13 9.75 4.64 9.47 5.40 9.00 C6.16 8.53 7.23 8.12 7.90 7.80 C8.57 7.48 8.70 7.49 9.10 7.20 C9.50 6.91 9.65 6.42 10.10 6.20 C10.55 5.98 11.01 6.05 11.60 6.00 C12.19 5.95 12.73 6.55 13.40 5.90 C14.07 5.25 15.30 2.40 15.30 2.40 C15.30 2.40 16.90 2.10 16.90 2.10 Z"/></svg>
<div class="r" style="top:511.8px;left:413.0px"><i class="fn">20220620T074457––web–developers<u>_</u><u>_</u>dev</i><i class="ex">.org</i></div>
<div class="r" style="top:533.2px"><i class="p0">–</i><i class="pr">r</i><i class="pw">w</i><i class="pn">–</i><i class="pr">r</i><i class="pn">–</i><i class="pn">–</i><i class="pr">r</i><i class="pn">–</i><i class="pn">–</i>   <i class="ln">1</i> <i class="us">jbaty staff</i> <i class="sz"> 506</i> <i class="dt">Jul 20 15:10</i></div>
<svg class="ic" style="left:378.0px;top:528.0px" width="24" height="24" viewBox="0 0 24 24" fill="#54bf74"><path d="M16.90 2.10 C16.90 2.10 15.02 6.01 15.00 7.00 C14.98 7.99 15.92 7.33 16.80 7.60 C17.68 7.87 19.14 8.14 19.90 8.50 C20.66 8.86 21.00 9.60 21.00 9.60 C21.00 9.60 21.10 10.40 20.70 10.80 C20.30 11.20 20.11 11.58 18.80 11.80 C17.49 12.02 13.40 12.00 13.40 12.00 C13.40 12.00 12.98 12.59 13.00 13.00 C13.02 13.41 13.03 13.71 13.50 14.30 C13.97 14.89 14.92 15.53 15.60 16.30 C16.28 17.07 16.89 17.93 17.30 18.60 C17.71 19.27 17.90 20.00 17.90 20.00 C17.90 20.00 17.11 19.52 16.30 19.20 C15.49 18.88 14.61 18.31 13.40 18.20 C12.19 18.09 10.81 18.65 9.60 18.60 C8.39 18.55 7.67 18.44 6.70 17.90 C5.73 17.36 4.87 16.55 4.20 15.60 C3.53 14.65 3.09 13.54 3.00 12.60 C2.91 11.66 3.27 11.05 3.70 10.40 C4.13 9.75 4.64 9.47 5.40 9.00 C6.16 8.53 7.23 8.12 7.90 7.80 C8.57 7.48 8.70 7.49 9.10 7.20 C9.50 6.91 9.65 6.42 10.10 6.20 C10.55 5.98 11.01 6.05 11.60 6.00 C12.19 5.95 12.73 6.55 13.40 5.90 C14.07 5.25 15.30 2.40 15.30 2.40 C15.30 2.40 16.90 2.10 16.90 2.10 Z"/></svg>
<div class="r" style="top:533.2px;left:413.0px"><i class="fn">20220620T152145––repair–sprinkler–heads–in–front–yard<u>_</u><u>_</u>house</i><i class="ex">.org</i></div>
<div class="r" style="top:554.6px"><i class="p0">–</i><i class="pr">r</i><i class="pw">w</i><i class="pn">–</i><i class="pr">r</i><i class="pn">–</i><i class="pn">–</i><i class="pr">r</i><i class="pn">–</i><i class="pn">–</i>   <i class="ln">1</i> <i class="us">jbaty staff</i> <i class="sz"> 329</i> <i class="dt">Jun 20 17:38</i></div>
<svg class="ic" style="left:378.0px;top:549.4px" width="24" height="24" viewBox="0 0 24 24" fill="#54bf74"><path d="M16.90 2.10 C16.90 2.10 15.02 6.01 15.00 7.00 C14.98 7.99 15.92 7.33 16.80 7.60 C17.68 7.87 19.14 8.14 19.90 8.50 C20.66 8.86 21.00 9.60 21.00 9.60 C21.00 9.60 21.10 10.40 20.70 10.80 C20.30 11.20 20.11 11.58 18.80 11.80 C17.49 12.02 13.40 12.00 13.40 12.00 C13.40 12.00 12.98 12.59 13.00 13.00 C13.02 13.41 13.03 13.71 13.50 14.30 C13.97 14.89 14.92 15.53 15.60 16.30 C16.28 17.07 16.89 17.93 17.30 18.60 C17.71 19.27 17.90 20.00 17.90 20.00 C17.90 20.00 17.11 19.52 16.30 19.20 C15.49 18.88 14.61 18.31 13.40 18.20 C12.19 18.09 10.81 18.65 9.60 18.60 C8.39 18.55 7.67 18.44 6.70 17.90 C5.73 17.36 4.87 16.55 4.20 15.60 C3.53 14.65 3.09 13.54 3.00 12.60 C2.91 11.66 3.27 11.05 3.70 10.40 C4.13 9.75 4.64 9.47 5.40 9.00 C6.16 8.53 7.23 8.12 7.90 7.80 C8.57 7.48 8.70 7.49 9.10 7.20 C9.50 6.91 9.65 6.42 10.10 6.20 C10.55 5.98 11.01 6.05 11.60 6.00 C12.19 5.95 12.73 6.55 13.40 5.90 C14.07 5.25 15.30 2.40 15.30 2.40 C15.30 2.40 16.90 2.10 16.90 2.10 Z"/></svg>
<div class="r" style="top:554.6px;left:413.0px"><i class="fn">20220620T173724––recoll<u>_</u><u>_</u>emacs</i><i class="ex">.org</i></div>
<div class="r" style="top:576.0px"><i class="p0">–</i><i class="pr">r</i><i class="pw">w</i><i class="pn">–</i><i class="pr">r</i><i class="pn">–</i><i class="pn">–</i><i class="pr">r</i><i class="pn">–</i><i class="pn">–</i>   <i class="ln">1</i> <i class="us">jbaty staff</i> <i class="sz"> 293</i> <i class="dt">Jun 22 07:15</i></div>
<svg class="ic" style="left:378.0px;top:570.8px" width="24" height="24" viewBox="0 0 24 24" fill="#54bf74"><path d="M16.90 2.10 C16.90 2.10 15.02 6.01 15.00 7.00 C14.98 7.99 15.92 7.33 16.80 7.60 C17.68 7.87 19.14 8.14 19.90 8.50 C20.66 8.86 21.00 9.60 21.00 9.60 C21.00 9.60 21.10 10.40 20.70 10.80 C20.30 11.20 20.11 11.58 18.80 11.80 C17.49 12.02 13.40 12.00 13.40 12.00 C13.40 12.00 12.98 12.59 13.00 13.00 C13.02 13.41 13.03 13.71 13.50 14.30 C13.97 14.89 14.92 15.53 15.60 16.30 C16.28 17.07 16.89 17.93 17.30 18.60 C17.71 19.27 17.90 20.00 17.90 20.00 C17.90 20.00 17.11 19.52 16.30 19.20 C15.49 18.88 14.61 18.31 13.40 18.20 C12.19 18.09 10.81 18.65 9.60 18.60 C8.39 18.55 7.67 18.44 6.70 17.90 C5.73 17.36 4.87 16.55 4.20 15.60 C3.53 14.65 3.09 13.54 3.00 12.60 C2.91 11.66 3.27 11.05 3.70 10.40 C4.13 9.75 4.64 9.47 5.40 9.00 C6.16 8.53 7.23 8.12 7.90 7.80 C8.57 7.48 8.70 7.49 9.10 7.20 C9.50 6.91 9.65 6.42 10.10 6.20 C10.55 5.98 11.01 6.05 11.60 6.00 C12.19 5.95 12.73 6.55 13.40 5.90 C14.07 5.25 15.30 2.40 15.30 2.40 C15.30 2.40 16.90 2.10 16.90 2.10 Z"/></svg>
<div class="r" style="top:576.0px;left:413.0px"><i class="fn">20220622T071506––journaling<u>_</u><u>_</u>writing</i><i class="ex">.org</i></div>
<div class="r" style="top:597.4px"><i class="p0">–</i><i class="pr">r</i><i class="pw">w</i><i class="pn">–</i><i class="pr">r</i><i class="pn">–</i><i class="pn">–</i><i class="pr">r</i><i class="pn">–</i><i class="pn">–</i>   <i class="ln">1</i> <i class="us">jbaty staff</i> <i class="sz"> 275</i> <i class="dt">Jun 22 18:07</i></div>
<svg class="ic" style="left:378.0px;top:592.2px" width="24" height="24" viewBox="0 0 24 24" fill="#54bf74"><path d="M16.90 2.10 C16.90 2.10 15.02 6.01 15.00 7.00 C14.98 7.99 15.92 7.33 16.80 7.60 C17.68 7.87 19.14 8.14 19.90 8.50 C20.66 8.86 21.00 9.60 21.00 9.60 C21.00 9.60 21.10 10.40 20.70 10.80 C20.30 11.20 20.11 11.58 18.80 11.80 C17.49 12.02 13.40 12.00 13.40 12.00 C13.40 12.00 12.98 12.59 13.00 13.00 C13.02 13.41 13.03 13.71 13.50 14.30 C13.97 14.89 14.92 15.53 15.60 16.30 C16.28 17.07 16.89 17.93 17.30 18.60 C17.71 19.27 17.90 20.00 17.90 20.00 C17.90 20.00 17.11 19.52 16.30 19.20 C15.49 18.88 14.61 18.31 13.40 18.20 C12.19 18.09 10.81 18.65 9.60 18.60 C8.39 18.55 7.67 18.44 6.70 17.90 C5.73 17.36 4.87 16.55 4.20 15.60 C3.53 14.65 3.09 13.54 3.00 12.60 C2.91 11.66 3.27 11.05 3.70 10.40 C4.13 9.75 4.64 9.47 5.40 9.00 C6.16 8.53 7.23 8.12 7.90 7.80 C8.57 7.48 8.70 7.49 9.10 7.20 C9.50 6.91 9.65 6.42 10.10 6.20 C10.55 5.98 11.01 6.05 11.60 6.00 C12.19 5.95 12.73 6.55 13.40 5.90 C14.07 5.25 15.30 2.40 15.30 2.40 C15.30 2.40 16.90 2.10 16.90 2.10 Z"/></svg>
<div class="r" style="top:597.4px;left:413.0px"><i class="fn">20220622T180717––stack–overflow–developer–survey<u>_</u><u>_</u>dev</i><i class="ex">.org</i></div>
<div class="r" style="top:618.8px"><i class="p0">–</i><i class="pr">r</i><i class="pw">w</i><i class="pn">–</i><i class="pr">r</i><i class="pn">–</i><i class="pn">–</i><i class="pr">r</i><i class="pn">–</i><i class="pn">–</i>   <i class="ln">1</i> <i class="us">jbaty staff</i> <i class="sz"> 121</i> <i class="dt">Jul 20 15:34</i></div>
<svg class="ic" style="left:378.0px;top:613.6px" width="24" height="24" viewBox="0 0 24 24" fill="#54bf74"><path d="M16.90 2.10 C16.90 2.10 15.02 6.01 15.00 7.00 C14.98 7.99 15.92 7.33 16.80 7.60 C17.68 7.87 19.14 8.14 19.90 8.50 C20.66 8.86 21.00 9.60 21.00 9.60 C21.00 9.60 21.10 10.40 20.70 10.80 C20.30 11.20 20.11 11.58 18.80 11.80 C17.49 12.02 13.40 12.00 13.40 12.00 C13.40 12.00 12.98 12.59 13.00 13.00 C13.02 13.41 13.03 13.71 13.50 14.30 C13.97 14.89 14.92 15.53 15.60 16.30 C16.28 17.07 16.89 17.93 17.30 18.60 C17.71 19.27 17.90 20.00 17.90 20.00 C17.90 20.00 17.11 19.52 16.30 19.20 C15.49 18.88 14.61 18.31 13.40 18.20 C12.19 18.09 10.81 18.65 9.60 18.60 C8.39 18.55 7.67 18.44 6.70 17.90 C5.73 17.36 4.87 16.55 4.20 15.60 C3.53 14.65 3.09 13.54 3.00 12.60 C2.91 11.66 3.27 11.05 3.70 10.40 C4.13 9.75 4.64 9.47 5.40 9.00 C6.16 8.53 7.23 8.12 7.90 7.80 C8.57 7.48 8.70 7.49 9.10 7.20 C9.50 6.91 9.65 6.42 10.10 6.20 C10.55 5.98 11.01 6.05 11.60 6.00 C12.19 5.95 12.73 6.55 13.40 5.90 C14.07 5.25 15.30 2.40 15.30 2.40 C15.30 2.40 16.90 2.10 16.90 2.10 Z"/></svg>
<div class="r" style="top:618.8px;left:413.0px"><i class="fn">20220625T063349––this–is–a–test–notes<u>_</u><u>_</u>misc</i><i class="ex">.org</i></div>
<div class="r" style="top:640.2px"><i class="p0">–</i><i class="pr">r</i><i class="pw">w</i><i class="pn">–</i><i class="pr">r</i><i class="pn">–</i><i class="pn">–</i><i class="pr">r</i><i class="pn">–</i><i class="pn">–</i>   <i class="ln">1</i> <i class="us">jbaty staff</i> <i class="sz"> 652</i> <i class="dt">Jul 20 15:34</i></div>
<svg class="ic" style="left:378.0px;top:635.0px" width="24" height="24" viewBox="0 0 24 24" fill="#54bf74"><path d="M16.90 2.10 C16.90 2.10 15.02 6.01 15.00 7.00 C14.98 7.99 15.92 7.33 16.80 7.60 C17.68 7.87 19.14 8.14 19.90 8.50 C20.66 8.86 21.00 9.60 21.00 9.60 C21.00 9.60 21.10 10.40 20.70 10.80 C20.30 11.20 20.11 11.58 18.80 11.80 C17.49 12.02 13.40 12.00 13.40 12.00 C13.40 12.00 12.98 12.59 13.00 13.00 C13.02 13.41 13.03 13.71 13.50 14.30 C13.97 14.89 14.92 15.53 15.60 16.30 C16.28 17.07 16.89 17.93 17.30 18.60 C17.71 19.27 17.90 20.00 17.90 20.00 C17.90 20.00 17.11 19.52 16.30 19.20 C15.49 18.88 14.61 18.31 13.40 18.20 C12.19 18.09 10.81 18.65 9.60 18.60 C8.39 18.55 7.67 18.44 6.70 17.90 C5.73 17.36 4.87 16.55 4.20 15.60 C3.53 14.65 3.09 13.54 3.00 12.60 C2.91 11.66 3.27 11.05 3.70 10.40 C4.13 9.75 4.64 9.47 5.40 9.00 C6.16 8.53 7.23 8.12 7.90 7.80 C8.57 7.48 8.70 7.49 9.10 7.20 C9.50 6.91 9.65 6.42 10.10 6.20 C10.55 5.98 11.01 6.05 11.60 6.00 C12.19 5.95 12.73 6.55 13.40 5.90 C14.07 5.25 15.30 2.40 15.30 2.40 C15.30 2.40 16.90 2.10 16.90 2.10 Z"/></svg>
<div class="r" style="top:640.2px;left:413.0px"><i class="fn">20220627T054824––denote–vs–org–roam</i><i class="ex">.org</i></div>
<div class="q" style="top:658.8px">?</div>
<div class="r" style="top:658.8px"><i class="p0">–</i><i class="pr">r</i><i class="pw">w</i><i class="pn">–</i><i class="pr">r</i><i class="pn">–</i><i class="pn">–</i><i class="pr">r</i><i class="pn">–</i><i class="pn">–</i>   <i class="ln">1</i> <i class="us">jbaty staff</i> <i class="sz"> 14K</i> <i class="dt">Jul 30 12:36</i></div>
<svg class="ic" style="left:383.9px;top:658.2px" width="15.4" height="17.4" viewBox="0 0 15.4 17.4"><path fill="#f2a94e" d="M0 0 H15.4 L14.1 13.8 L7.7 17.4 L1.3 13.8 Z"/><path fill="#1c1d1f" d="M3.3 3.8 H12 V5.6 H5.3 L5.5 8.0 H11.8 L11.4 12.6 L7.7 13.9 L4.1 12.6 L3.9 10.6 H5.7 L5.8 11.4 L7.7 12.0 L9.6 11.4 L9.8 9.7 H3.7 Z"/></svg>
<div class="r" style="top:658.8px;left:413.0px"><i class="fn">20220704T064711––aquarium<u>_</u><u>_</u>house</i><i class="ex">.html</i></div>
<div class="bang" style="top:676.7px"><div class="bb"></div><div class="bd"></div></div>
<div class="r" style="top:679.9px"><i class="p0">–</i><i class="pr">r</i><i class="pw">w</i><i class="pn">–</i><i class="pr">r</i><i class="pn">–</i><i class="pn">–</i><i class="pr">r</i><i class="pn">–</i><i class="pn">–</i>   <i class="ln">1</i> <i class="us">jbaty staff</i> <i class="sz">3.7K</i> <i class="dt">Jul 31 05:53</i></div>
<svg class="ic" style="left:378.0px;top:674.7px" width="24" height="24" viewBox="0 0 24 24" fill="#54bf74"><path d="M16.90 2.10 C16.90 2.10 15.02 6.01 15.00 7.00 C14.98 7.99 15.92 7.33 16.80 7.60 C17.68 7.87 19.14 8.14 19.90 8.50 C20.66 8.86 21.00 9.60 21.00 9.60 C21.00 9.60 21.10 10.40 20.70 10.80 C20.30 11.20 20.11 11.58 18.80 11.80 C17.49 12.02 13.40 12.00 13.40 12.00 C13.40 12.00 12.98 12.59 13.00 13.00 C13.02 13.41 13.03 13.71 13.50 14.30 C13.97 14.89 14.92 15.53 15.60 16.30 C16.28 17.07 16.89 17.93 17.30 18.60 C17.71 19.27 17.90 20.00 17.90 20.00 C17.90 20.00 17.11 19.52 16.30 19.20 C15.49 18.88 14.61 18.31 13.40 18.20 C12.19 18.09 10.81 18.65 9.60 18.60 C8.39 18.55 7.67 18.44 6.70 17.90 C5.73 17.36 4.87 16.55 4.20 15.60 C3.53 14.65 3.09 13.54 3.00 12.60 C2.91 11.66 3.27 11.05 3.70 10.40 C4.13 9.75 4.64 9.47 5.40 9.00 C6.16 8.53 7.23 8.12 7.90 7.80 C8.57 7.48 8.70 7.49 9.10 7.20 C9.50 6.91 9.65 6.42 10.10 6.20 C10.55 5.98 11.01 6.05 11.60 6.00 C12.19 5.95 12.73 6.55 13.40 5.90 C14.07 5.25 15.30 2.40 15.30 2.40 C15.30 2.40 16.90 2.10 16.90 2.10 Z"/></svg>
<div class="r" style="top:679.9px;left:413.0px"><i class="fn">20220704T064711––aquarium<u>_</u><u>_</u>house</i><i class="ex">.org</i></div>
<div class="r" style="top:701.3px"><i class="p0">–</i><i class="pr">r</i><i class="pw">w</i><i class="pn">–</i><i class="pr">r</i><i class="pn">–</i><i class="pn">–</i><i class="pr">r</i><i class="pn">–</i><i class="pn">–</i>   <i class="ln">1</i> <i class="us">jbaty staff</i> <i class="sz"> 376</i> <i class="dt">Jul  5 05:29</i></div>
<svg class="ic" style="left:378.0px;top:696.1px" width="24" height="24" viewBox="0 0 24 24" fill="#54bf74"><path d="M16.90 2.10 C16.90 2.10 15.02 6.01 15.00 7.00 C14.98 7.99 15.92 7.33 16.80 7.60 C17.68 7.87 19.14 8.14 19.90 8.50 C20.66 8.86 21.00 9.60 21.00 9.60 C21.00 9.60 21.10 10.40 20.70 10.80 C20.30 11.20 20.11 11.58 18.80 11.80 C17.49 12.02 13.40 12.00 13.40 12.00 C13.40 12.00 12.98 12.59 13.00 13.00 C13.02 13.41 13.03 13.71 13.50 14.30 C13.97 14.89 14.92 15.53 15.60 16.30 C16.28 17.07 16.89 17.93 17.30 18.60 C17.71 19.27 17.90 20.00 17.90 20.00 C17.90 20.00 17.11 19.52 16.30 19.20 C15.49 18.88 14.61 18.31 13.40 18.20 C12.19 18.09 10.81 18.65 9.60 18.60 C8.39 18.55 7.67 18.44 6.70 17.90 C5.73 17.36 4.87 16.55 4.20 15.60 C3.53 14.65 3.09 13.54 3.00 12.60 C2.91 11.66 3.27 11.05 3.70 10.40 C4.13 9.75 4.64 9.47 5.40 9.00 C6.16 8.53 7.23 8.12 7.90 7.80 C8.57 7.48 8.70 7.49 9.10 7.20 C9.50 6.91 9.65 6.42 10.10 6.20 C10.55 5.98 11.01 6.05 11.60 6.00 C12.19 5.95 12.73 6.55 13.40 5.90 C14.07 5.25 15.30 2.40 15.30 2.40 C15.30 2.40 16.90 2.10 16.90 2.10 Z"/></svg>
<div class="r" style="top:701.3px;left:413.0px"><i class="fn">20220705T052909––rational–emacs<u>_</u><u>_</u>emacs</i><i class="ex">.org</i></div>
<div class="r" style="top:722.7px"><i class="p0">–</i><i class="pr">r</i><i class="pw">w</i><i class="pn">–</i><i class="pr">r</i><i class="pn">–</i><i class="pn">–</i><i class="pr">r</i><i class="pn">–</i><i class="pn">–</i>   <i class="ln">1</i> <i class="us">jbaty staff</i> <i class="sz"> 846</i> <i class="dt">Jul  9 04:50</i></div>
<svg class="ic" style="left:378.0px;top:717.5px" width="24" height="24" viewBox="0 0 24 24" fill="#54bf74"><path d="M16.90 2.10 C16.90 2.10 15.02 6.01 15.00 7.00 C14.98 7.99 15.92 7.33 16.80 7.60 C17.68 7.87 19.14 8.14 19.90 8.50 C20.66 8.86 21.00 9.60 21.00 9.60 C21.00 9.60 21.10 10.40 20.70 10.80 C20.30 11.20 20.11 11.58 18.80 11.80 C17.49 12.02 13.40 12.00 13.40 12.00 C13.40 12.00 12.98 12.59 13.00 13.00 C13.02 13.41 13.03 13.71 13.50 14.30 C13.97 14.89 14.92 15.53 15.60 16.30 C16.28 17.07 16.89 17.93 17.30 18.60 C17.71 19.27 17.90 20.00 17.90 20.00 C17.90 20.00 17.11 19.52 16.30 19.20 C15.49 18.88 14.61 18.31 13.40 18.20 C12.19 18.09 10.81 18.65 9.60 18.60 C8.39 18.55 7.67 18.44 6.70 17.90 C5.73 17.36 4.87 16.55 4.20 15.60 C3.53 14.65 3.09 13.54 3.00 12.60 C2.91 11.66 3.27 11.05 3.70 10.40 C4.13 9.75 4.64 9.47 5.40 9.00 C6.16 8.53 7.23 8.12 7.90 7.80 C8.57 7.48 8.70 7.49 9.10 7.20 C9.50 6.91 9.65 6.42 10.10 6.20 C10.55 5.98 11.01 6.05 11.60 6.00 C12.19 5.95 12.73 6.55 13.40 5.90 C14.07 5.25 15.30 2.40 15.30 2.40 C15.30 2.40 16.90 2.10 16.90 2.10 Z"/></svg>
<div class="r" style="top:722.7px;left:413.0px"><i class="fn">20220708T045906––film–photography<u>_</u><u>_</u>photography</i><i class="ex">.org</i></div>
<div class="r" style="top:744.1px"><i class="p0">–</i><i class="pr">r</i><i class="pw">w</i><i class="pn">–</i><i class="pr">r</i><i class="pn">–</i><i class="pn">–</i><i class="pr">r</i><i class="pn">–</i><i class="pn">–</i>   <i class="ln">1</i> <i class="us">jbaty staff</i> <i class="sz"> 227</i> <i class="dt">Jul  8 07:50</i></div>
<svg class="ic" style="left:378.0px;top:738.9px" width="24" height="24" viewBox="0 0 24 24" fill="#54bf74"><path d="M16.90 2.10 C16.90 2.10 15.02 6.01 15.00 7.00 C14.98 7.99 15.92 7.33 16.80 7.60 C17.68 7.87 19.14 8.14 19.90 8.50 C20.66 8.86 21.00 9.60 21.00 9.60 C21.00 9.60 21.10 10.40 20.70 10.80 C20.30 11.20 20.11 11.58 18.80 11.80 C17.49 12.02 13.40 12.00 13.40 12.00 C13.40 12.00 12.98 12.59 13.00 13.00 C13.02 13.41 13.03 13.71 13.50 14.30 C13.97 14.89 14.92 15.53 15.60 16.30 C16.28 17.07 16.89 17.93 17.30 18.60 C17.71 19.27 17.90 20.00 17.90 20.00 C17.90 20.00 17.11 19.52 16.30 19.20 C15.49 18.88 14.61 18.31 13.40 18.20 C12.19 18.09 10.81 18.65 9.60 18.60 C8.39 18.55 7.67 18.44 6.70 17.90 C5.73 17.36 4.87 16.55 4.20 15.60 C3.53 14.65 3.09 13.54 3.00 12.60 C2.91 11.66 3.27 11.05 3.70 10.40 C4.13 9.75 4.64 9.47 5.40 9.00 C6.16 8.53 7.23 8.12 7.90 7.80 C8.57 7.48 8.70 7.49 9.10 7.20 C9.50 6.91 9.65 6.42 10.10 6.20 C10.55 5.98 11.01 6.05 11.60 6.00 C12.19 5.95 12.73 6.55 13.40 5.90 C14.07 5.25 15.30 2.40 15.30 2.40 C15.30 2.40 16.90 2.10 16.90 2.10 Z"/></svg>
<div class="r" style="top:744.1px;left:413.0px"><i class="fn">20220708T074648––ghost–cms<u>_</u><u>_</u>blogging</i><i class="ex">.org</i></div>
<div class="r" style="top:765.5px"><i class="p0">–</i><i class="pr">r</i><i class="pw">w</i><i class="pn">–</i><i class="pr">r</i><i class="pn">–</i><i class="pn">–</i><i class="pr">r</i><i class="pn">–</i><i class="pn">–</i>   <i class="ln">1</i> <i class="us">jbaty staff</i> <i class="sz"> 732</i> <i class="dt">Jul 20 13:42</i></div>
<svg class="ic" style="left:378.0px;top:760.3px" width="24" height="24" viewBox="0 0 24 24" fill="#54bf74"><path d="M16.90 2.10 C16.90 2.10 15.02 6.01 15.00 7.00 C14.98 7.99 15.92 7.33 16.80 7.60 C17.68 7.87 19.14 8.14 19.90 8.50 C20.66 8.86 21.00 9.60 21.00 9.60 C21.00 9.60 21.10 10.40 20.70 10.80 C20.30 11.20 20.11 11.58 18.80 11.80 C17.49 12.02 13.40 12.00 13.40 12.00 C13.40 12.00 12.98 12.59 13.00 13.00 C13.02 13.41 13.03 13.71 13.50 14.30 C13.97 14.89 14.92 15.53 15.60 16.30 C16.28 17.07 16.89 17.93 17.30 18.60 C17.71 19.27 17.90 20.00 17.90 20.00 C17.90 20.00 17.11 19.52 16.30 19.20 C15.49 18.88 14.61 18.31 13.40 18.20 C12.19 18.09 10.81 18.65 9.60 18.60 C8.39 18.55 7.67 18.44 6.70 17.90 C5.73 17.36 4.87 16.55 4.20 15.60 C3.53 14.65 3.09 13.54 3.00 12.60 C2.91 11.66 3.27 11.05 3.70 10.40 C4.13 9.75 4.64 9.47 5.40 9.00 C6.16 8.53 7.23 8.12 7.90 7.80 C8.57 7.48 8.70 7.49 9.10 7.20 C9.50 6.91 9.65 6.42 10.10 6.20 C10.55 5.98 11.01 6.05 11.60 6.00 C12.19 5.95 12.73 6.55 13.40 5.90 C14.07 5.25 15.30 2.40 15.30 2.40 C15.30 2.40 16.90 2.10 16.90 2.10 Z"/></svg>
<div class="r" style="top:765.5px;left:413.0px"><i class="fn">20220720T134154––nb<u>_</u><u>_</u>software</i><i class="ex">.org</i></div>
<div class="r" style="top:786.9px"><i class="p0">–</i><i class="pr">r</i><i class="pw">w</i><i class="pn">–</i><i class="pr">r</i><i class="pn">–</i><i class="pn">–</i><i class="pr">r</i><i class="pn">–</i><i class="pn">–</i>   <i class="ln">1</i> <i class="us">jbaty staff</i> <i class="sz"> 288</i> <i class="dt">Jul 20 15:28</i></div>
<svg class="ic" style="left:378.0px;top:781.7px" width="24" height="24" viewBox="0 0 24 24" fill="#54bf74"><path d="M16.90 2.10 C16.90 2.10 15.02 6.01 15.00 7.00 C14.98 7.99 15.92 7.33 16.80 7.60 C17.68 7.87 19.14 8.14 19.90 8.50 C20.66 8.86 21.00 9.60 21.00 9.60 C21.00 9.60 21.10 10.40 20.70 10.80 C20.30 11.20 20.11 11.58 18.80 11.80 C17.49 12.02 13.40 12.00 13.40 12.00 C13.40 12.00 12.98 12.59 13.00 13.00 C13.02 13.41 13.03 13.71 13.50 14.30 C13.97 14.89 14.92 15.53 15.60 16.30 C16.28 17.07 16.89 17.93 17.30 18.60 C17.71 19.27 17.90 20.00 17.90 20.00 C17.90 20.00 17.11 19.52 16.30 19.20 C15.49 18.88 14.61 18.31 13.40 18.20 C12.19 18.09 10.81 18.65 9.60 18.60 C8.39 18.55 7.67 18.44 6.70 17.90 C5.73 17.36 4.87 16.55 4.20 15.60 C3.53 14.65 3.09 13.54 3.00 12.60 C2.91 11.66 3.27 11.05 3.70 10.40 C4.13 9.75 4.64 9.47 5.40 9.00 C6.16 8.53 7.23 8.12 7.90 7.80 C8.57 7.48 8.70 7.49 9.10 7.20 C9.50 6.91 9.65 6.42 10.10 6.20 C10.55 5.98 11.01 6.05 11.60 6.00 C12.19 5.95 12.73 6.55 13.40 5.90 C14.07 5.25 15.30 2.40 15.30 2.40 C15.30 2.40 16.90 2.10 16.90 2.10 Z"/></svg>
<div class="r" style="top:786.9px;left:413.0px"><i class="fn">20220720T152807––longwood–ct<u>_</u><u>_</u>house</i><i class="ex">.org</i></div>
<div class="bang" style="top:805.1px"><div class="bb"></div><div class="bd"></div></div>
<div class="r" style="top:808.3px"><i class="p0">–</i><i class="pr">r</i><i class="pw">w</i><i class="pn">–</i><i class="pr">r</i><i class="pn">–</i><i class="pn">–</i><i class="pr">r</i><i class="pn">–</i><i class="pn">–</i>   <i class="ln">1</i> <i class="us">jbaty staff</i> <i class="sz"> 557</i> <i class="dt">Jul 26 05:49</i></div>
<svg class="ic" style="left:378.0px;top:803.1px" width="24" height="24" viewBox="0 0 24 24" fill="#54bf74"><path d="M16.90 2.10 C16.90 2.10 15.02 6.01 15.00 7.00 C14.98 7.99 15.92 7.33 16.80 7.60 C17.68 7.87 19.14 8.14 19.90 8.50 C20.66 8.86 21.00 9.60 21.00 9.60 C21.00 9.60 21.10 10.40 20.70 10.80 C20.30 11.20 20.11 11.58 18.80 11.80 C17.49 12.02 13.40 12.00 13.40 12.00 C13.40 12.00 12.98 12.59 13.00 13.00 C13.02 13.41 13.03 13.71 13.50 14.30 C13.97 14.89 14.92 15.53 15.60 16.30 C16.28 17.07 16.89 17.93 17.30 18.60 C17.71 19.27 17.90 20.00 17.90 20.00 C17.90 20.00 17.11 19.52 16.30 19.20 C15.49 18.88 14.61 18.31 13.40 18.20 C12.19 18.09 10.81 18.65 9.60 18.60 C8.39 18.55 7.67 18.44 6.70 17.90 C5.73 17.36 4.87 16.55 4.20 15.60 C3.53 14.65 3.09 13.54 3.00 12.60 C2.91 11.66 3.27 11.05 3.70 10.40 C4.13 9.75 4.64 9.47 5.40 9.00 C6.16 8.53 7.23 8.12 7.90 7.80 C8.57 7.48 8.70 7.49 9.10 7.20 C9.50 6.91 9.65 6.42 10.10 6.20 C10.55 5.98 11.01 6.05 11.60 6.00 C12.19 5.95 12.73 6.55 13.40 5.90 C14.07 5.25 15.30 2.40 15.30 2.40 C15.30 2.40 16.90 2.10 16.90 2.10 Z"/></svg>
<div class="r" style="top:808.3px;left:413.0px"><i class="fn">20220721T050639––hugo<u>_</u><u>_</u>software</i><i class="ex">.org</i></div>
<div class="r" style="top:829.7px"><i class="p0">–</i><i class="pr">r</i><i class="pw">w</i><i class="pn">–</i><i class="pr">r</i><i class="pn">–</i><i class="pn">–</i><i class="pr">r</i><i class="pn">–</i><i class="pn">–</i>   <i class="ln">1</i> <i class="us">jbaty staff</i> <i class="sz"> 275</i> <i class="dt">Jul 22 18:04</i></div>
<svg class="ic" style="left:378.0px;top:824.5px" width="24" height="24" viewBox="0 0 24 24" fill="#54bf74"><path d="M16.90 2.10 C16.90 2.10 15.02 6.01 15.00 7.00 C14.98 7.99 15.92 7.33 16.80 7.60 C17.68 7.87 19.14 8.14 19.90 8.50 C20.66 8.86 21.00 9.60 21.00 9.60 C21.00 9.60 21.10 10.40 20.70 10.80 C20.30 11.20 20.11 11.58 18.80 11.80 C17.49 12.02 13.40 12.00 13.40 12.00 C13.40 12.00 12.98 12.59 13.00 13.00 C13.02 13.41 13.03 13.71 13.50 14.30 C13.97 14.89 14.92 15.53 15.60 16.30 C16.28 17.07 16.89 17.93 17.30 18.60 C17.71 19.27 17.90 20.00 17.90 20.00 C17.90 20.00 17.11 19.52 16.30 19.20 C15.49 18.88 14.61 18.31 13.40 18.20 C12.19 18.09 10.81 18.65 9.60 18.60 C8.39 18.55 7.67 18.44 6.70 17.90 C5.73 17.36 4.87 16.55 4.20 15.60 C3.53 14.65 3.09 13.54 3.00 12.60 C2.91 11.66 3.27 11.05 3.70 10.40 C4.13 9.75 4.64 9.47 5.40 9.00 C6.16 8.53 7.23 8.12 7.90 7.80 C8.57 7.48 8.70 7.49 9.10 7.20 C9.50 6.91 9.65 6.42 10.10 6.20 C10.55 5.98 11.01 6.05 11.60 6.00 C12.19 5.95 12.73 6.55 13.40 5.90 C14.07 5.25 15.30 2.40 15.30 2.40 C15.30 2.40 16.90 2.10 16.90 2.10 Z"/></svg>
<div class="r" style="top:829.7px;left:413.0px"><i class="fn">20220722T065000––panasonic–lumix–s5<u>_</u><u>_</u>photography</i><i class="ex">.org</i></div>
<div id="ml"><div id="mlbar"></div><div id="mldot"></div><svg id="lock" width="15" height="19" viewBox="0 0 15 19"><path fill="none" stroke="#d8b65e" stroke-width="2.1" d="M3.9 7.5 V5.2 Q3.9 1.1 7.5 1.1 Q11.2 1.1 11.2 5.2 V7.5"/><rect x="0" y="6.5" width="15" height="12.1" rx="1.8" fill="#d8b65e"/><circle cx="7.4" cy="12.2" r="1.4" fill="#353535"/></svg><div class="r mlt" style="top:8.2px;left:78.0px">~/Documents/notes/</div><div class="r mlr" style="top:8.2px;left:982.6px">Dired by name</div></div>
<div id="mlline"></div>
<div class="r" style="top:872.6px;left:8.0px;color:#dfe1ea">Dired–Hide–Details mode disabled in current buffer</div>
<div id="wb"></div>
</div>
</body></html>
